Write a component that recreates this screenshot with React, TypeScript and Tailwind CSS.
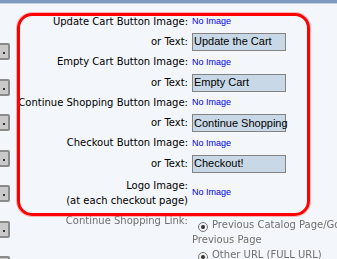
import React from "react";

const rows: { label: string; kind: "img" | "text"; value: string }[] = [
  { label: "Update Cart Button Image:", kind: "img", value: "No Image" },
  { label: "or Text:", kind: "text", value: "Update the Cart" },
  { label: "Empty Cart Button Image:", kind: "img", value: "No Image" },
  { label: "or Text:", kind: "text", value: "Empty Cart" },
  { label: "Continue Shopping Button Image:", kind: "img", value: "No Image" },
  { label: "or Text:", kind: "text", value: "Continue Shopping" },
  { label: "Checkout Button Image:", kind: "img", value: "No Image" },
  { label: "or Text:", kind: "text", value: "Checkout!" },
];

function SideButton() {
  return (
    <div className="-ml-[6px] flex h-[17px] w-[16px] items-center rounded-[2px] border-2 border-[#8a8a8a] bg-[#c9c9c9] pl-[7px] pt-[3px]">
      <div className="h-[2px] w-[2px] bg-[#333]" />
    </div>
  );
}

function Radio() {
  return (
    <span className="mr-[4px] ml-[6px] inline-flex h-[10px] w-[10px] items-center justify-center rounded-full border border-[#777] bg-[#f0f0f0] align-[-1px]">
      <span className="h-[4px] w-[4px] rounded-full bg-[#333]" />
    </span>
  );
}

export default function App() {
  return (
    <div
      className="relative h-[259px] w-[337px] overflow-hidden bg-[#f3f6fa] text-[10px] text-black"
      style={{ fontFamily: '"DejaVu Sans", Verdana, sans-serif' }}
    >
      <div className="h-[4px] border-b border-[#c3d1e2] bg-[#7d99bd]" />
      <div className="flex">
        <div className="flex w-[12px] shrink-0 flex-col gap-[18.5px] pt-[39px] blur-[0.6px]">
          <SideButton />
          <SideButton />
          <SideButton />
          <SideButton />
          <SideButton />
          <SideButton />
          <SideButton />
        </div>
        <div className="flex flex-1 flex-col pt-[7.5px]">
          {rows.map((r, i) => (
            <div key={i} className="flex h-[20.3px] items-center gap-[4px] whitespace-nowrap">
              <div className="w-[176px] shrink-0 text-right leading-none">{r.label}</div>
              {r.kind === "img" ? (
                <div
                  className="text-[9px] leading-none text-[#0000ff]"
                  style={{ fontFamily: '"Liberation Sans", Arial, sans-serif' }}
                >
                  {r.value}
                </div>
              ) : (
                <div
                  className="flex h-[18px] w-[94px] items-center border border-[#838383] bg-[#c8d8e6] pl-[1px] text-[11px] leading-none"
                  style={{ fontFamily: '"Liberation Sans", Arial, sans-serif' }}
                >
                  {r.value}
                </div>
              )}
            </div>
          ))}
          <div className="flex h-[38px] items-center gap-[4px] whitespace-nowrap">
            <div className="w-[176px] shrink-0 text-right leading-[15px]">
              <div>Logo Image:</div>
              <div>(at each checkout page)</div>
            </div>
            <div
              className="text-[9px] leading-none text-[#0000ff]"
              style={{ fontFamily: '"Liberation Sans", Arial, sans-serif' }}
            >
              No Image
            </div>
          </div>
          <div className="flex items-start gap-[4px] whitespace-nowrap text-[#707070] blur-[0.7px]">
            <div className="w-[176px] shrink-0 pt-[1px] text-right leading-[15px]">Continue Shopping Link:</div>
            <div className="pt-[5px] leading-[15px]">
              <div>
                <Radio />
                Previous Catalog Page/Go Back to
              </div>
              <div>Previous Page</div>
              <div>
                <Radio />
                Other URL (FULL URL)
              </div>
            </div>
          </div>
        </div>
      </div>
      <div className="pointer-events-none absolute left-[17px] top-[13px] h-[203px] w-[293px] rounded-[15px] border-[3px] border-[#ff0000] shadow-[0_0_0_1px_rgba(255,60,60,0.35)]" />
    </div>
  );
}
